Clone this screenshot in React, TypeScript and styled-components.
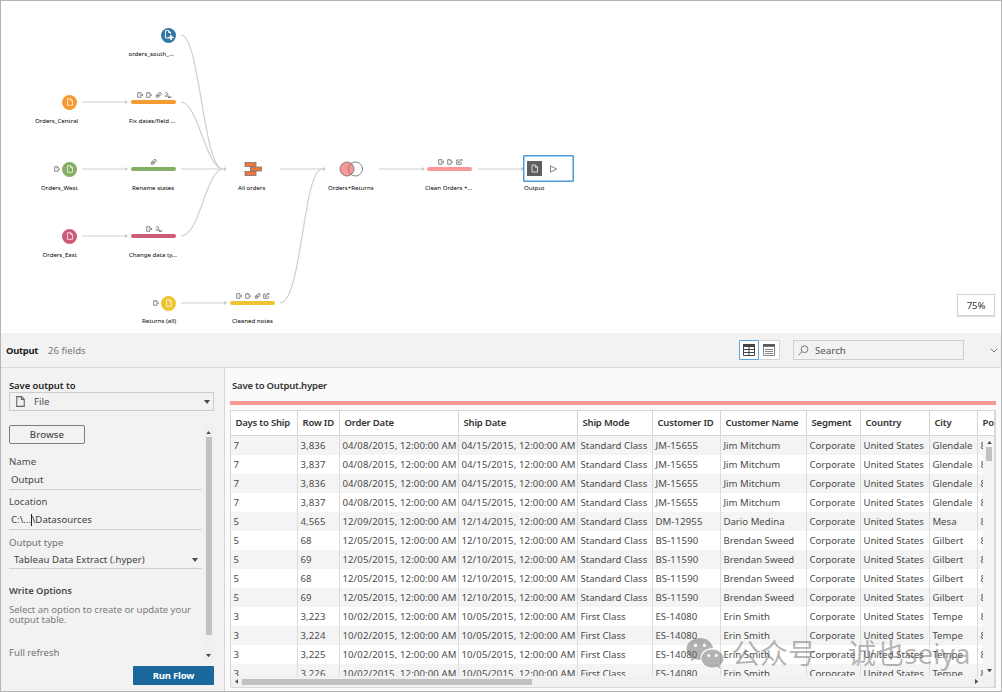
import React from 'react';
import styled, { createGlobalStyle } from 'styled-components';

const GlobalStyle = createGlobalStyle`
  * {
    box-sizing: border-box;
  }
  body {
    margin: 0;
    font-family: 'Noto Sans', 'Open Sans', sans-serif;
    font-size: 9.6px;
    color: #4b4b4b;
    background: #fff;
  }
`;

const Window = styled.div`
  position: relative;
  width: 1002px;
  height: 692px;
  display: flex;
  flex-direction: column;
  overflow: hidden;
  border: 1px solid #b4b4b4;
  background: #fff;
`;

// ---------- flow canvas ----------
const Canvas = styled.div`
  position: relative;
  flex: 0 0 332px;
`;

const Wires = styled.svg`
  position: absolute;
  left: -1px;
  top: -1px;
`;

const Node = styled.div<{ $x: number; $y: number }>`
  position: absolute;
  left: ${(p) => p.$x - 1}px;
  top: ${(p) => p.$y - 1}px;
`;

const NodeLabel = styled(Node)`
  font-size: 6.1px;
  line-height: 8px;
  color: #000;
  white-space: nowrap;
`;

const StepBar = styled(Node)<{ $color: string }>`
  width: 45px;
  height: 4px;
  border-radius: 2px;
  background: ${(p) => p.$color};
`;

const SourceDot = styled(Node)<{ $color: string }>`
  width: 15px;
  height: 15px;
  border-radius: 50%;
  display: flex;
  align-items: center;
  justify-content: center;
  background: ${(p) => p.$color};
`;

const IconStrip = styled(Node)`
  display: flex;
  gap: 1px;
`;

const OutputNode = styled(Node)`
  width: 51px;
  height: 27px;
  display: flex;
  align-items: center;
  gap: 7px;
  padding-left: 3px;
  border: 1px solid #4a9bd9;
  box-shadow: inset 0 0 0 0.5px #4a9bd9;
  border-radius: 1px;
  background: #fff;
`;

const Zoom = styled(Node)`
  width: 38px;
  height: 22px;
  line-height: 21px;
  text-align: center;
  letter-spacing: -0.1px;
  border: 1px solid #d4d4d4;
  box-shadow: 0 1px 1px rgba(0, 0, 0, 0.12);
  background: #fff;
  color: #333;
`;

// ---------- toolbar ----------
const Toolbar = styled.div`
  flex: 0 0 35px;
  display: flex;
  align-items: center;
  padding: 0 3px 0 5px;
  background: #f2f2f2;
  border-bottom: 1px solid #dadada;
`;

const Title = styled.b`
  width: 33px;
  font-size: 9.4px;
  font-weight: 700;
  letter-spacing: -0.25px;
  color: #222;
`;

const FieldCount = styled.span`
  flex: 1;
  margin-left: 9px;
  color: #777;
`;

const ViewSwitch = styled.div`
  display: flex;
  width: 41px;
  height: 20px;
  border: 1px solid #d6d6d6;
  background: #fff;
`;

const ViewButton = styled.div<{ $active?: boolean }>`
  width: 20px;
  height: 20px;
  margin: -1px 0 0 -1px;
  display: flex;
  align-items: center;
  justify-content: center;
  border: 1px solid ${(p) => (p.$active ? '#5ba4dc' : 'transparent')};
  border-radius: 1px;
  & + & {
    margin-left: 0;
  }
`;

const Search = styled.div`
  width: 171px;
  height: 20px;
  margin: 0 26px 0 13px;
  padding-left: 4px;
  display: flex;
  align-items: center;
  gap: 6px;
  border: 1px solid #cfcfcf;
  color: #666;
  font-weight: 500;
`;

// ---------- lower area ----------
const Lower = styled.div`
  flex: 1;
  display: flex;
  min-height: 0;
`;

const Side = styled.div`
  width: 224px;
  padding: 12px 10px 0 8px;
  background: #f2f2f2;
  border-right: 1px solid #d6d6d6;
`;

const SideTitle = styled.div`
  height: 11px;
  line-height: 11px;
  font-size: 9.4px;
  font-weight: 600;
  letter-spacing: -0.04px;
  color: #222;
`;

const FileSelect = styled.div`
  height: 19px;
  margin-top: 1px;
  padding: 0 3px 0 6px;
  display: flex;
  align-items: center;
  gap: 9px;
  border: 1px solid #cccccc;
  & span {
    flex: 1;
  }
`;

const SideBody = styled.div`
  display: flex;
  height: 235px;
  margin-top: 15px;
`;

const Form = styled.div`
  width: 193px;
`;

const Browse = styled.div`
  width: 76px;
  height: 19px;
  margin-top: -1px;
  line-height: 18px;
  text-align: center;
  font-weight: 500;
  letter-spacing: 0.1px;
  border: 1px solid #7d7d7d;
  border-radius: 2px;
`;

const Label = styled.div<{ $top: number; $light?: boolean }>`
  height: 12px;
  line-height: 12px;
  margin-top: ${(p) => p.$top}px;
  color: ${(p) => (p.$light ? '#717171' : '#4b4b4b')};
`;

const Field = styled.div<{ $h: number; $indent?: number }>`
  height: ${(p) => p.$h}px;
  padding: 2px 4px 0 ${(p) => p.$indent || 2}px;
  display: flex;
  align-items: center;
  justify-content: space-between;
  letter-spacing: 0.05px;
  border-bottom: 1px solid #d0d0d0;
  color: #3f3f3f;
`;

const Caret = styled.i`
  display: inline-block;
  width: 1px;
  height: 12px;
  margin: 0 -0.5px 0 0;
  vertical-align: middle;
  background: #222;
`;

const Hint = styled.div`
  margin-top: 8px;
  line-height: 10px;
  letter-spacing: -0.06px;
  color: #7d7d7d;
  white-space: nowrap;
`;

const SideScroll = styled.div`
  width: 11px;
  margin-left: 1px;
  display: flex;
  flex-direction: column;
  align-items: center;
  padding: 5px 0 4px;
  background: #f0f0f0;
  & > :last-child {
    margin-top: auto;
  }
`;

const Thumb = styled.div<{ $w: number; $h: number }>`
  width: ${(p) => p.$w}px;
  height: ${(p) => p.$h}px;
  background: #c1c1c1;
`;

const ThumbGap = styled.div`
  height: 3px;
`;

const RunButton = styled.div`
  width: 81px;
  height: 19px;
  margin: 5px 0 0 auto;
  line-height: 19px;
  text-align: center;
  font-size: 9.5px;
  font-weight: 700;
  letter-spacing: -0.2px;
  color: #fff;
  border-radius: 1px;
  background: #19679b;
`;

const Main = styled.div`
  flex: 1;
  min-width: 0;
  padding: 0 5px;
  background: #fafafa;
`;

const MainTitle = styled.div`
  height: 33px;
  padding-left: 2px;
  line-height: 35px;
  font-size: 9.5px;
  font-weight: 600;
  letter-spacing: -0.2px;
  color: #333;
`;

const Stripe = styled.div`
  height: 4px;
  margin-bottom: 5px;
  background: #fa9896;
`;

const Grid = styled.div`
  height: 278px;
  border: 1px solid #d8d8d8;
  border-right-width: 2px;
  background: #fff;
  overflow: hidden;
`;

const HeadRow = styled.div`
  display: grid;
  grid-template-columns: 67px 42px 119px 119px 75px 68px 86px 54px 69px 48px 17px;
  height: 25px;
  border-bottom: 1px solid #d6d6d6;
`;

const HeadCell = styled.div`
  padding-left: 4.5px;
  line-height: 24px;
  font-size: 9.5px;
  font-weight: 600;
  letter-spacing: -0.2px;
  color: #333;
  white-space: nowrap;
  overflow: hidden;
  border-right: 1px solid #d6d6d6;
  &:last-child {
    border-right: 0;
  }
`;

const BodyArea = styled.div`
  display: flex;
  height: 240px;
`;

const Rows = styled.div`
  width: 753px;
  overflow: hidden;
`;

const Row = styled.div<{ $odd: boolean }>`
  display: grid;
  grid-template-columns: 67px 42px 119px 119px 75px 68px 86px 54px 69px 48px 6px;
  height: 19px;
  background: ${(p) => (p.$odd ? '#fff' : '#f4f4f4')};
`;

const Cell = styled.div<{ $digits: boolean }>`
  padding-left: 2.4px;
  line-height: 20px;
  letter-spacing: ${(p) => (p.$digits ? '0.12px' : '0.02px')};
  white-space: nowrap;
  overflow: hidden;
  border-right: 1px solid #dcdcdc;
  &:last-child {
    border-right: 0;
  }
`;

const VScroll = styled.div`
  width: 11px;
  display: flex;
  flex-direction: column;
  align-items: center;
  padding: 5px 0 4px 1px;
  background: #f4f4f4;
  & > :last-child {
    margin-top: auto;
  }
`;

const HScroll = styled.div`
  height: 11px;
  display: flex;
  align-items: center;
  gap: 4px;
  padding: 0 16px 0 4px;
  background: #f1f1f1;
  & > :last-child {
    margin-left: auto;
  }
`;

const Watermark = styled.div`
  position: absolute;
  left: 685px;
  top: 632px;
  display: flex;
  align-items: center;
  color: rgba(110, 110, 110, 0.52);
  font-family: 'Noto Sans', 'Noto Sans CJK SC', sans-serif;
  font-size: 28px;
  line-height: 40px;
  white-space: pre;
  & span {
    margin-left: 8px;
    word-spacing: 5px;
  }
`;

interface ArrowProps {
  dir?: 'up' | 'down' | 'left' | 'right';
  size?: number;
}

const arrowPoints = {
  up: '0,4 6,4 3,0',
  down: '0,0 6,0 3,4',
  left: '4,0 4,6 0,3',
  right: '0,0 0,6 4,3',
};

const Arrow: React.FC<ArrowProps> = ({ dir = 'down', size = 6 }) => {
  const flat = dir === 'up' || dir === 'down';
  return (
    <svg
      width={flat ? size : (size * 2) / 3}
      height={flat ? (size * 2) / 3 : size}
      viewBox={flat ? '0 0 6 4' : '0 0 4 6'}
    >
      <polygon points={arrowPoints[dir]} fill="#4a4a4a" />
    </svg>
  );
};

const FileIcon: React.FC<{ w: number; h: number; color: string }> = ({
  w,
  h,
  color,
}) => (
  <svg width={w} height={h} viewBox="0 0 8 10" fill="none" stroke={color}>
    <path d="M0.6 0.6H5L7.4 3V9.4H0.6ZM4.8 0.8V3.2H7.2" />
  </svg>
);

type OpKind = 'in' | 'out' | 'clip' | 'type' | 'edit';

const opPaths: Record<OpKind, string> = {
  in: 'M4 2V0.7H0.7V5.3H4V4M2.5 3H5.8M4.8 2L5.8 3L4.8 4',
  out: 'M3.8 5.3H0.7V0.7H3.2L5.5 2.6M3.2 0.8V2.5M4 5.3V3.8M3.8 3.4H5.8',
  clip: 'M1.4 3.4L3.9 0.8Q5.2 -0.2 6 1Q6.5 1.9 5.7 2.8L3.4 5.2Q2 6.2 1.2 5.1Q0.8 4.2 1.6 3.4M2.4 4.3L4.8 1.8M1.4 3.2H3.2M4.6 3L3 4.6',
  type: 'M1.2 1.6Q1.6 0.3 2.9 0.6Q4 1.2 3.2 2.3L1.2 4.3H3.6M3.6 2.6L4.8 5.8L7.2 4.9M5 4.2L4.6 5.9M6.2 4.4L7.1 5',
  edit: 'M3.5 1H0.7V5.3H5.2V3.2M2.1 4L5.8 0.5M2 2.3L3.5 4M4.5 0.5H6V2',
};

const Op: React.FC<{ kind: OpKind }> = ({ kind }) => (
  <svg width="8" height="7" viewBox="0 0 8 7" fill="none" stroke="#606060">
    <path d={opPaths[kind]} strokeWidth="0.75" />
  </svg>
);

const labels: [number, number, string][] = [
  [128.5, 50, 'orders_south_...'],
  [35, 117, 'Orders_Central'],
  [129, 117, 'Fix dates/field ...'],
  [41, 184, 'Orders_West'],
  [132, 184, 'Rename states'],
  [238, 184, 'All orders'],
  [328, 184, 'Orders+Returns'],
  [425, 184, 'Clean Orders +...'],
  [524, 184, 'Output'],
  [42.5, 251, 'Orders_East'],
  [129, 251, 'Change data ty...'],
  [142, 317, 'Returns (all)'],
  [232, 317, 'Cleaned notes'],
];

const sources: [number, number, string][] = [
  [62, 94.5, '#f59b31'],
  [62, 161.5, '#83ae63'],
  [62, 228.5, '#cc5b78'],
  [161, 295.5, '#efc331'],
];

const bars: [number, number, string][] = [
  [131, 100, '#f59b31'],
  [131, 167, '#83ae63'],
  [131, 234, '#cc5b78'],
  [230, 301, '#efc331'],
  [427, 167, '#fa9896'],
];

const strips: [number, number, OpKind[]][] = [
  [137, 92, ['in', 'out', 'clip', 'type']],
  [54, 166, ['out']],
  [150, 159, ['clip']],
  [146, 226, ['in', 'type']],
  [152.5, 300, ['out']],
  [236, 293, ['in', 'out', 'clip', 'edit']],
  [438, 159, ['in', 'out', 'edit']],
];

const straight: [number, number, number][] = [
  [82, 102, 127],
  [82, 169, 127],
  [181, 169, 226],
  [280, 169, 325],
  [379, 169, 424],
  [478, 169, 523],
  [82, 236, 127],
  [181, 303, 226],
];

const headers = [
  'Days to Ship',
  'Row ID',
  'Order Date',
  'Ship Date',
  'Ship Mode',
  'Customer ID',
  'Customer Name',
  'Segment',
  'Country',
  'City',
  'Pos',
];

const order = (
  days: string,
  id: string,
  from: string,
  to: string,
  mode: string,
  customer: string,
  name: string,
  city: string,
): string[] => [
  days,
  id,
  `${from}/2015, 12:00:00 AM`,
  `${to}/2015, 12:00:00 AM`,
  mode,
  customer,
  name,
  'Corporate',
  'United States',
  city,
  '8',
];

const jim = (id: string) =>
  order('7', id, '04/08', '04/15', 'Standard Class', 'JM-15655', 'Jim Mitchum', 'Glendale');
const brendan = (id: string) =>
  order('5', id, '12/05', '12/10', 'Standard Class', 'BS-11590', 'Brendan Sweed', 'Gilbert');
const erin = (id: string) =>
  order('3', id, '10/02', '10/05', 'First Class', 'ES-14080', 'Erin Smith', 'Tempe');

const rows = [
  jim('3,836'),
  jim('3,837'),
  jim('3,836'),
  jim('3,837'),
  order('5', '4,565', '12/09', '12/14', 'Standard Class', 'DM-12955', 'Dario Medina', 'Mesa'),
  brendan('68'),
  brendan('69'),
  brendan('68'),
  brendan('69'),
  erin('3,223'),
  erin('3,224'),
  erin('3,225'),
  erin('3,226'),
];

const Flow: React.FC = () => (
  <Canvas>
    <Wires width="1000" height="332" fill="none" stroke="#cfcfcf">
      {straight.map(([x, y, end]) => (
        <g key={`${x}-${y}`}>
          <path d={`M${x} ${y}H${end}`} strokeWidth="1.2" />
          <path d={`M${end - 2} ${y - 2}L${end + 1} ${y}L${end - 2} ${y + 2}Z`} fill="#c8c8c8" stroke="none" />
        </g>
      ))}
      <path d="M181 35C200 35 203 169 223 169M181 102C198 102 206 169 223 169M181 236C200 236 206 169 223 169M280 303C302 303 303 169 322 169" strokeWidth="1.2" />
      {/* union */}
      <g fill="#f5763b" stroke="#777" strokeWidth="0.8">
        <rect x="245" y="162.5" width="11" height="4" />
        <rect x="245" y="171.5" width="11" height="4" />
        <rect x="250.5" y="167" width="11" height="4" />
      </g>
      {/* join */}
      <circle cx="347" cy="169" r="7" fill="#fa9896" stroke="#777" strokeWidth="0.9" />
      <circle cx="355.5" cy="169" r="7" stroke="#777" strokeWidth="0.9" />
    </Wires>
    <SourceDot $x={161} $y={27.5} $color="#3577a5">
      <svg width="11" height="12" viewBox="0 0 11 12" fill="none" stroke="#fff">
        <path d="M7.5 5V3.5L5.5 1.5H2.5V9H6M5.5 1.5V3.5H7.5" strokeWidth="0.9" />
        <path d="M8 6V11M5.5 8.5H10.5" strokeWidth="1.5" />
      </svg>
    </SourceDot>
    {sources.map(([x, y, color]) => (
      <SourceDot key={y} $x={x} $y={y} $color={color}>
        <FileIcon w={6} h={8} color="#fff" />
      </SourceDot>
    ))}
    {bars.map(([x, y, color]) => (
      <StepBar key={`${x}-${y}`} $x={x} $y={y} $color={color} />
    ))}
    {strips.map(([x, y, kinds]) => (
      <IconStrip key={`${x}-${y}`} $x={x} $y={y}>
        {kinds.map((kind) => (
          <Op key={kind} kind={kind} />
        ))}
      </IconStrip>
    ))}
    {labels.map(([x, y, text]) => (
      <NodeLabel key={text} $x={x} $y={y}>
        {text}
      </NodeLabel>
    ))}
    <OutputNode $x={523} $y={155}>
      <svg width="15" height="15" viewBox="0 0 15 15" fill="none">
        <rect width="15" height="15" fill="#5f5f5f" />
        <path d="M5 4H8.5L10.5 6V11H5ZM8.3 4.2V6.3H10.3" stroke="#e6e6e6" strokeWidth="0.9" />
      </svg>
      <svg width="9" height="8" viewBox="0 0 9 8" fill="none" stroke="#777">
        <path d="M1.5 0.8L7.5 4L1.5 7.2Z" strokeWidth="0.9" />
      </svg>
    </OutputNode>
    <Zoom $x={957} $y={294}>
      75%
    </Zoom>
  </Canvas>
);

export default function App() {
  return (
    <>
      <GlobalStyle />
      <Window>
        <Flow />
        <Toolbar>
          <Title>Output</Title>
          <FieldCount>26 fields</FieldCount>
          <ViewSwitch>
            <ViewButton $active>
              <svg width="12" height="12" viewBox="0 0 12 12" fill="none" stroke="#444">
                <path d="M0.5 1.5H11.5V11.5H0.5ZM0.5 5.5H11.5M0.5 8.5H11.5M6 2V11.5" strokeWidth="1" />
                <path d="M0 1.5H12" strokeWidth="3" />
              </svg>
            </ViewButton>
            <ViewButton>
              <svg width="12" height="12" viewBox="0 0 12 12" fill="none" stroke="#777">
                <path d="M0.5 0.5H11.5V11.5H0.5ZM2 5.5H10M2 7.5H10M2 9.5H10" strokeWidth="0.9" />
                <path d="M0 1.5H12" stroke="#555" strokeWidth="2.5" />
              </svg>
            </ViewButton>
          </ViewSwitch>
          <Search>
            <svg width="11" height="11" viewBox="0 0 11 11" fill="none" stroke="#777">
              <circle cx="6.5" cy="4.2" r="3.4" />
              <path d="M4 6.7L0.5 10.3" />
            </svg>
            Search
          </Search>
          <svg width="8" height="5" viewBox="0 0 8 5" fill="none" stroke="#777">
            <path d="M0.7 0.7L4 4L7.3 0.7" />
          </svg>
        </Toolbar>
        <Lower>
          <Side>
            <SideTitle>Save output to</SideTitle>
            <FileSelect>
              <FileIcon w={9} h={11} color="#666" />
              <span>File</span>
              <Arrow />
            </FileSelect>
            <SideBody>
              <Form>
                <Browse>Browse</Browse>
                <Label $top={12}>Name</Label>
                <Field $h={22}>Output</Field>
                <Label $top={6}>Location</Label>
                <Field $h={22}>
                  <span>
                    C:\...
                    <Caret />
                    \Datasources
                  </span>
                </Field>
                <Label $top={7} $light>
                  Output type
                </Label>
                <Field $h={20} $indent={5}>
                  Tableau Data Extract (.hyper)
                  <Arrow />
                </Field>
                <Label $top={16} as={SideTitle}>
                  Write Options
                </Label>
                <Hint>
                  Select an option to create or update your
                  <br />
                  output table.
                </Hint>
                <Label $top={22} $light>
                  Full refresh
                </Label>
              </Form>
              <SideScroll>
                <Arrow dir="up" size={5} />
                <ThumbGap />
                <Thumb $w={6} $h={198} />
                <Arrow size={5} />
              </SideScroll>
            </SideBody>
            <RunButton>Run Flow</RunButton>
          </Side>
          <Main>
            <MainTitle>Save to Output.hyper</MainTitle>
            <Stripe />
            <Grid>
              <HeadRow>
                {headers.map((h) => (
                  <HeadCell key={h}>{h}</HeadCell>
                ))}
              </HeadRow>
              <BodyArea>
                <Rows>
                  {rows.map((row, i) => (
                    <Row key={i} $odd={i % 2 === 1}>
                      {row.map((value, j) => (
                        <Cell key={j} $digits={/\d/.test(value)}>
                          {value}
                        </Cell>
                      ))}
                    </Row>
                  ))}
                </Rows>
                <VScroll>
                  <Arrow dir="up" size={5} />
                  <ThumbGap />
                  <Thumb $w={6} $h={14} />
                  <Arrow size={5} />
                </VScroll>
              </BodyArea>
              <HScroll>
                <Arrow dir="left" size={5} />
                <Thumb $w={290} $h={6} />
                <Arrow dir="right" size={5} />
              </HScroll>
            </Grid>
          </Main>
        </Lower>
        <Watermark>
          <svg width="38" height="32" viewBox="0 0 38 32" fill="currentColor">
            <path
              fillRule="evenodd"
              d="M14 1C6 1 0.5 6 0.5 12C0.5 15.5 2.5 18.5 5.5 20.5L4.5 24.5L9 22C11 22.6 13 22.9 14.8 22.7C13.5 16 19 11 27 11C26 5 20.5 1 14 1ZM9.5 6.5A1.7 1.7 0 1 1 9.4 6.5ZM18.5 6.5A1.7 1.7 0 1 1 18.4 6.5Z"
            />
            <path
              fillRule="evenodd"
              d="M26.5 12.5C20 12.5 15.5 16.5 15.5 21.5C15.5 26.5 20.5 30.5 26.5 30.5C28 30.5 29.5 30.2 30.8 29.8L34.5 31.5L33.5 28.3C36 26.6 37.5 24.2 37.5 21.5C37.5 16.5 32.5 12.5 26.5 12.5ZM22.8 17A1.5 1.5 0 1 1 22.7 17ZM30.3 17A1.5 1.5 0 1 1 30.2 17Z"
            />
          </svg>
          <span>公众号 · 诚也seiya</span>
        </Watermark>
      </Window>
    </>
  );
}
